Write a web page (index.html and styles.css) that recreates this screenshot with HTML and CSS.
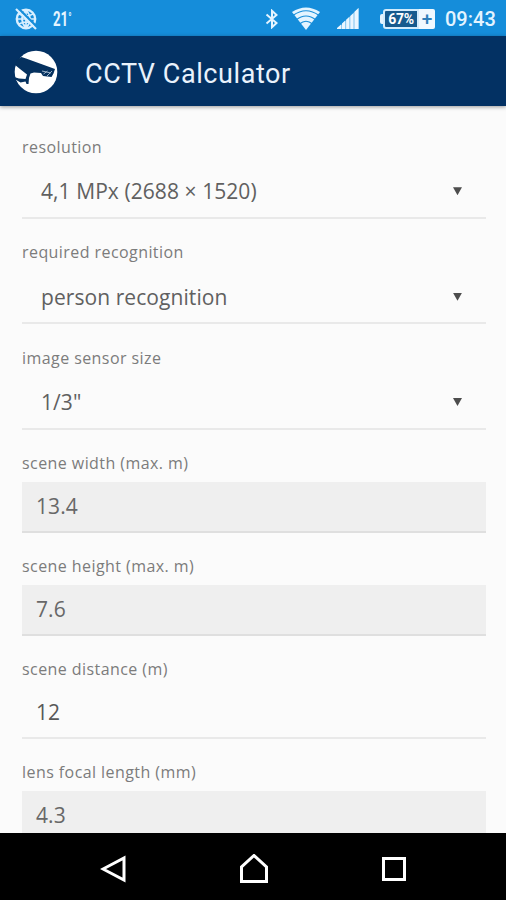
FILE: index.html
```html
<!DOCTYPE html>
<html lang="en">
<head>
<meta charset="utf-8">
<title>CCTV Calculator</title>
<link rel="stylesheet" href="styles.css">
</head>
<body>
<div class="screen">
  <div class="status">
    <svg class="s-globe" width="24" height="24" viewBox="0 0 24 24" fill="none" stroke="#d9efff">
      <circle cx="12" cy="12" r="9.2" stroke-width="2.4"/>
      <path d="M12 3v18M3 12h18M5 7q7 4 14 0M5 17q7-4 14 0M12 3q-8 9 0 18M12 3q8 9 0 18" stroke-width="1.7"/>
      <path d="M4 1L23 20" stroke="#158dda" stroke-width="2.4"/>
      <path d="M2 2L22 22" stroke-width="2.2"/>
    </svg>
    <span class="temp">21<span class="deg">°</span></span>
    <span class="spacer"></span>
    <svg class="s-bt" width="14" height="20" viewBox="0 0 14 20" fill="none" stroke="#e4f4ff" stroke-width="2"><path d="M1.5 5.5L11.5 14 7 18.2V1.8L11.5 6 1.5 14.5"/></svg>
    <svg class="s-wifi" width="28" height="23" viewBox="0 0 28 23">
      <path d="M0 5Q14-4 28 5L14 23Z" fill="#e4f4ff"/>
      <path d="M1 8.5Q14-1 27 8.5M4 13Q14 5 24 13M7.5 17Q14 11.500 20.500 17" fill="none" stroke="#158dda" stroke-width="1.100"/>
    </svg>
    <svg class="s-signal" width="22" height="21" viewBox="0 0 22 21"><path d="M0 21L21.500 0v21z" fill="#8fcbf1"/><path d="M0 21v-1l4-3.500v4.500zM5 21v-5.500l3-2.800V21zM9.200 21V11.800l3-2.800V21zM13.400 21V8l3-2.700V21zM17.600 21V3.800L21.500 0v21z" fill="#eaf6ff"/></svg>
    <div class="battery"><span class="nub"></span><span class="charge">67%</span><span class="plus">+</span></div>
    <span class="time">09:43</span>
  </div>
  <header class="bar">
    <svg class="logo" width="44" height="44" viewBox="0 0 44 44">
      <circle cx="22" cy="22" r="21.300" fill="#fff"/>
      <path d="M3 9.500L7.500 7 12 8.500 41 19 39.500 23.500 37.500 27 29 26 27 23 20 22.500 16.500 23.500 15 28 14.500 34 12.500 34 11.500 31.500 6.500 32.500 1.500 29.500 0 27 5 28.500 11.500 29 13 24.500 6 19 .5 14.500Z" fill="#05315f"/>
      <path d="M28 21l9 2M29.500 24l4-3M33 26l5-5" stroke="#9db4ca" stroke-width="1" fill="none"/>
    </svg>
    <h1 class="title">CCTV Calculator</h1>
  </header>
  <main class="form">
    <div class="field select"><div class="label">resolution</div><div class="control"><span>4,1 MPx (2688 × 1520)</span><i class="arrow"></i></div></div>
    <div class="field select"><div class="label">required recognition</div><div class="control"><span>person recognition</span><i class="arrow"></i></div></div>
    <div class="field select"><div class="label">image sensor size</div><div class="control"><span>1/3"</span><i class="arrow"></i></div></div>
    <div class="field"><div class="label">scene width (max. m)</div><div class="control filled">13.4</div></div>
    <div class="field"><div class="label">scene height (max. m)</div><div class="control filled">7.6</div></div>
    <div class="field"><div class="label">scene distance (m)</div><div class="control editable">12</div></div>
    <div class="field"><div class="label">lens focal length (mm)</div><div class="control filled">4.3</div></div>
  </main>
  <nav class="nav">
    <svg width="28" height="30" viewBox="0 0 28 30"><path d="M24 4v22L3 15z"/></svg>
    <svg width="30" height="30" viewBox="0 0 30 30"><path d="M2.500 27.500V13L15 1.500 27.500 13V27.500z"/></svg>
    <svg width="26" height="26" viewBox="0 0 26 26"><path d="M2.500 2.500h21v21h-21z"/></svg>
  </nav>
</div>
</body>
</html>
```
FILE: styles.css
```css
* { box-sizing: border-box; }
body { margin: 0; }
.screen { width: 506px; height: 900px; display: flex; flex-direction: column; overflow: hidden; background: #fbfbfb; font-family: "Open Sans", sans-serif; }
.status { height: 36px; flex: none; display: flex; align-items: center; background: #158dda; color: #e4f4ff; font-family: Roboto, sans-serif; padding: 1px 11px 0 14px; }
.temp { margin-left: 15px; font-size: 20px; font-weight: 700; line-height: 36px; transform: scaleX(.66); transform-origin: left; }
.deg { font-size: 13px; vertical-align: 4px; }
.spacer { flex: 1; }
.s-bt { margin-right: 13px; }
.s-wifi { margin-right: 17px; }
.s-signal { margin-right: 21px; }
.battery { display: flex; align-items: center; width: 55px; height: 20px; margin-right: 10px; }
.nub { width: 3px; height: 10px; background: #e4f4ff; border-radius: 2px 0 0 2px; }
.charge { width: 36px; height: 20px; border: 2px solid #d3ecfc; border-radius: 3px 0 0 3px; background: #175b8e; font-size: 14px; font-weight: 700; line-height: 16px; text-align: center; letter-spacing: -.3px; color: #fff; }
.plus { width: 16px; height: 20px; background: #f0f9ff; border-radius: 0 2px 2px 0; color: #2f7fb9; font-size: 19px; font-weight: 500; line-height: 19px; text-align: center; }
.time { font-size: 20px; font-weight: 500; line-height: 36px; width: 50px; white-space: nowrap; }
.bar { height: 70px; flex: none; display: flex; align-items: center; padding: 2px 14px 0; background: #033163; box-shadow: 0 1px 4px rgba(0,0,0,.4); position: relative; }
.logo { flex: none; margin-left: -.5px; }
.title { margin: 3px 0 0 27.500px; font: 400 27px/36px Roboto, sans-serif; letter-spacing: .57px; color: #e9f2fc; white-space: nowrap; }
.form { flex: 1; min-height: 0; overflow: hidden; padding: 28.700px 20px 0 22px; }
.field { height: 102.850px; }
.select { height: 105.450px; }
.label { height: 24px; margin-bottom: 7px; font-size: 16px; line-height: 24px; letter-spacing: .43px; color: #7c7c7c; white-space: nowrap; }
.control { display: flex; align-items: center; height: 51px; padding: 0 14px 1px; border-bottom: 2px solid #e9e9e9; font-size: 21px; letter-spacing: .07px; color: #686868; white-space: nowrap; }
.select .control { height: 53px; justify-content: space-between; padding: 0 24px 0 19px; color: #606060; }
.control.filled { background: #efefef; border-color: #dfdfdf; }
.control.editable { color: #585858; }
.arrow { width: 9px; height: 8px; background: #4d4d4d; clip-path: polygon(0 0, 100% 0, 50% 100%); }
.nav { height: 67px; flex: none; display: flex; align-items: center; justify-content: space-between; padding: 5px 99px 0 100px; background: #000; }
.nav svg:nth-child(2) { margin-right: 1px; }
.nav path { fill: none; stroke: #fff; stroke-width: 3; }
```
